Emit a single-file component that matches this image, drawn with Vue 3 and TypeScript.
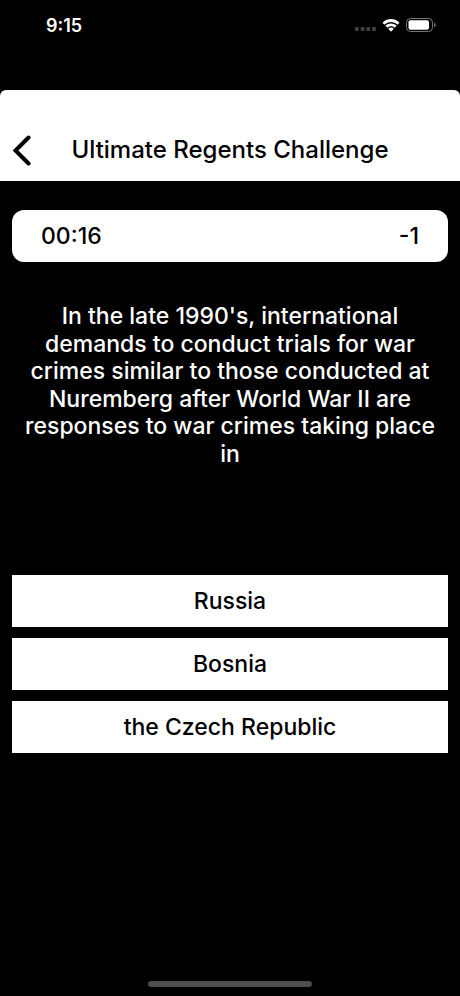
<script setup lang="ts">
const title: string = 'Ultimate Regents Challenge'
const elapsed: string = '00:16'
const score: number = -1
const question: string =
  "In the late 1990's, international demands to conduct trials for war crimes similar to those conducted at Nuremberg after World War II are responses to war crimes taking place in"
const answers: string[] = ['Russia', 'Bosnia', 'the Czech Republic']
</script>

<template>
  <div class="screen">
    <div class="status">
      <span class="clock">9:15</span>
      <div class="indicators">
        <svg class="cell" viewBox="0 0 21 4" aria-hidden="true">
          <rect x="0" y="0" width="3.800" height="4" rx="1" />
          <rect x="5.700" y="0" width="3.800" height="4" rx="1" />
          <rect x="11.400" y="0" width="3.800" height="4" rx="1" />
          <rect x="17.100" y="0" width="3.800" height="4" rx="1" />
        </svg>
        <svg class="wifi" viewBox="0 0 18 13" aria-hidden="true">
          <path d="M9 2.900c2.400 0 4.600.9 6.300 2.500.1.1.3.1.5 0l1.500-1.500c.1-.1.1-.4 0-.5C15.100 1.300 12.200.1 9 .1S2.900 1.300.7 3.400c-.1.1-.1.4 0 .5l1.500 1.500c.2.1.4.1.5 0C4.400 3.800 6.600 2.900 9 2.900z" />
          <path d="M9 7.200c1.300 0 2.500.5 3.400 1.300.2.1.4.1.5 0l1.500-1.500c.1-.2.1-.4 0-.5C13 5.200 11.100 4.400 9 4.400s-4 .8-5.400 2.100c-.1.1-.1.3 0 .5l1.500 1.500c.1.1.3.1.5 0C6.500 7.700 7.700 7.200 9 7.200z" />
          <path d="M11.600 9.500c.1.100.1.300 0 .5L9.200 12.400c-.1.100-.3.100-.4 0L6.400 10c-.1-.2-.1-.4 0-.5C7.100 8.900 8 8.500 9 8.500s1.900.4 2.600 1z" />
        </svg>
        <svg class="battery" viewBox="0 0 30 14" aria-hidden="true">
          <rect class="shell" x=".5" y=".5" width="26" height="13" rx="4" />
          <rect x="2.500" y="2.300" width="20.500" height="9.400" rx="2" />
          <path class="cap" d="M28 4.700c1 .4 1.600 1.300 1.600 2.300S29 8.900 28 9.300z" />
        </svg>
      </div>
    </div>
    <header class="bar">
      <button class="back" type="button" aria-label="Back">
        <svg viewBox="0 0 20 32" aria-hidden="true"><path d="M16.500 3.500L3.500 16.500l13 13" /></svg>
      </button>
      <h1>{{ title }}</h1>
    </header>
    <main>
      <div class="stats"><span>{{ elapsed }}</span><span>{{ score }}</span></div>
      <p class="question">{{ question }}</p>
      <div class="answers">
        <button v-for="answer in answers" :key="answer" type="button">{{ answer }}</button>
      </div>
    </main>
    <div class="home"></div>
  </div>
</template>

<style>
body {
  background: #000;
}
</style>

<style scoped>
.screen {
  display: flex;
  flex-direction: column;
  min-height: 100vh;
  background: #000;
  color: #fff;
  font-family: Inter, Roboto, sans-serif;
  font-weight: 500;
}
.status {
  display: flex;
  align-items: center;
  justify-content: space-between;
  box-sizing: border-box;
  height: 90px;
  padding: 0 24px 40px 46px;
}
.clock {
  font-size: 18px;
  font-weight: 600;
}
.indicators {
  display: flex;
  align-items: center;
  gap: 6px;
  fill: #fff;
}
.cell {
  width: 21px;
  height: 4px;
  margin-top: 8px;
  fill: #404040;
}
.wifi {
  width: 18px;
  height: 13px;
}
.battery {
  width: 30px;
  height: 14px;
}
.shell {
  fill: none;
  stroke: #777;
}
.cap {
  fill: #777;
}
.bar {
  display: grid;
  grid-template-columns: 46px 1fr 46px;
  align-items: center;
  box-sizing: border-box;
  height: 91px;
  padding-top: 28px;
  border-radius: 6px 6px 0 0;
  background: #fff;
  color: #000;
}
.back {
  display: flex;
  padding: 0 0 0 12px;
  border: 0;
  background: none;
}
.back svg {
  width: 20px;
  height: 32px;
  fill: none;
  stroke: #000;
  stroke-width: 4;
  stroke-linecap: round;
}
h1 {
  margin: 0;
  font-size: 24px;
  font-weight: 500;
  text-align: center;
  white-space: nowrap;
}
main {
  flex: 1;
  padding: 29px 12px 0;
}
.stats {
  display: flex;
  align-items: center;
  justify-content: space-between;
  height: 52px;
  padding: 0 29px;
  border-radius: 12px;
  background: #fff;
  color: #000;
  font-size: 23px;
}
.question {
  min-height: 272px;
  margin: 41px 12px 0;
  font-size: 23px;
  line-height: 1.2;
  text-align: center;
}
.answers {
  display: grid;
  gap: 11px;
}
.answers button {
  height: 52px;
  border: 0;
  border-radius: 0;
  background: #fff;
  color: #000;
  font: inherit;
  font-size: 23px;
}
.home {
  align-self: center;
  width: 164px;
  height: 6px;
  margin-bottom: 9px;
  border-radius: 3px;
  background: #4d4d4d;
}
</style>
